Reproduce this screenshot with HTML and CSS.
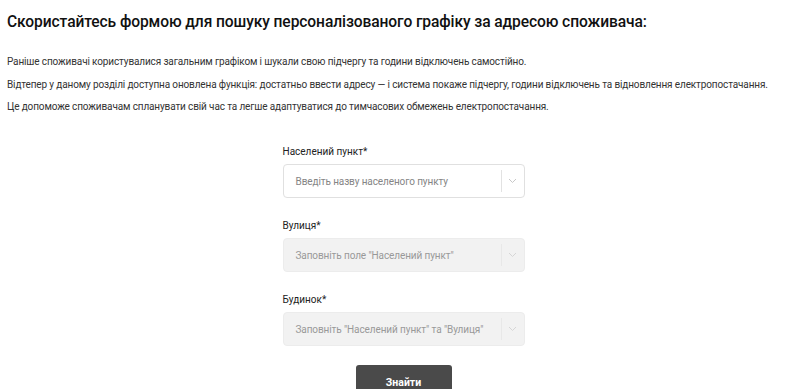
FILE: index.html
```html
<!DOCTYPE html>
<html lang="uk">
<head>
    <meta charset="UTF-8">
    <meta name="viewport" content="width=device-width, initial-scale=1.0">
    <title>Графік відключень</title>
    <link rel="stylesheet" href="styles.css">
</head>
<body>
    <div class="page">
        <h1>Скористайтесь формою для пошуку персоналізованого графіку за адресою споживача:</h1>

        <p>Раніше споживачі користувалися загальним графіком і шукали свою підчергу та години відключень самостійно.</p>
        <p>Відтепер у даному розділі доступна оновлена функція: достатньо ввести адресу — і система покаже підчергу, години відключень та відновлення електропостачання.</p>
        <p>Це допоможе споживачам спланувати свій час та легше адаптуватися до тимчасових обмежень електропостачання.</p>

        <form class="search-form" onsubmit="return false;">
            <div class="field">
                <label>Населений пункт*</label>
                <div class="select">
                    <span class="placeholder">Введіть назву населеного пункту</span>
                    <span class="sep"></span>
                    <span class="arrow"><svg width="9" height="6" viewBox="0 0 9 6"><path d="M1 1l3.5 3.5L8 1" fill="none" stroke="#c8c8c8" stroke-width="1"/></svg></span>
                </div>
            </div>
            <div class="field">
                <label>Вулиця*</label>
                <div class="select disabled">
                    <span class="placeholder">Заповніть поле "Населений пункт"</span>
                    <span class="sep"></span>
                    <span class="arrow"><svg width="9" height="6" viewBox="0 0 9 6"><path d="M1 1l3.5 3.5L8 1" fill="none" stroke="#d6d6d6" stroke-width="1"/></svg></span>
                </div>
            </div>
            <div class="field">
                <label>Будинок*</label>
                <div class="select disabled">
                    <span class="placeholder">Заповніть "Населений пункт" та "Вулиця"</span>
                    <span class="sep"></span>
                    <span class="arrow"><svg width="9" height="6" viewBox="0 0 9 6"><path d="M1 1l3.5 3.5L8 1" fill="none" stroke="#d6d6d6" stroke-width="1"/></svg></span>
                </div>
            </div>
            <button type="submit">Знайти</button>
        </form>
    </div>
</body>
</html>
```

FILE: styles.css
```css
body {
    margin: 0;
    padding: 0;
    background-color: #fff;
    color: #222;
    font-family: Roboto, "Liberation Sans", sans-serif;
}
.page {
    padding: 11px 0 0 7px;
}
h1 {
    font-family: Roboto, "Noto Sans", sans-serif;
    font-size: 15.6px;
    font-weight: 500;
    line-height: 22px;
    margin: 0 0 22px 0;
    color: #111;
    white-space: nowrap;
    letter-spacing: -0.1px;
}
p {
    font-size: 10px;
    line-height: 14px;
    margin: 0 0 8.5px 0;
    color: #333;
    letter-spacing: -0.13px;
}
.search-form {
    width: 242px;
    margin: 31px auto 0 auto;
    display: flex;
    flex-direction: column;
    align-items: center;
}
.field {
    width: 100%;
    margin-bottom: 21px;
}
.field label {
    display: block;
    font-size: 10px;
    line-height: 14px;
    margin-bottom: 5px;
    color: #222;
}
.select {
    height: 34px;
    box-sizing: border-box;
    border: 1px solid #e0e0e0;
    border-radius: 4px;
    background-color: #fff;
    display: flex;
    align-items: center;
    padding-left: 12px;
}
.select.disabled {
    background-color: #f2f2f2;
    border-color: #ececec;
}
.placeholder {
    flex: 1;
    font-size: 10px;
    color: #858585;
    white-space: nowrap;
    letter-spacing: -0.1px;
}
.disabled .placeholder {
    color: #999;
}
.sep {
    width: 1px;
    height: 22px;
    background-color: #e2e2e2;
}
.disabled .sep {
    background-color: #e8e8e8;
}
.arrow {
    width: 22px;
    display: flex;
    justify-content: center;
    align-items: center;
}
button {
    margin-top: -2px;
    width: 96px;
    height: 34px;
    border: none;
    border-radius: 3px;
    background-color: #4a4a4a;
    color: #fff;
    font-family: Roboto, "Liberation Sans", sans-serif;
    font-weight: 700;
    font-size: 10.5px;
    cursor: pointer;
}
```
